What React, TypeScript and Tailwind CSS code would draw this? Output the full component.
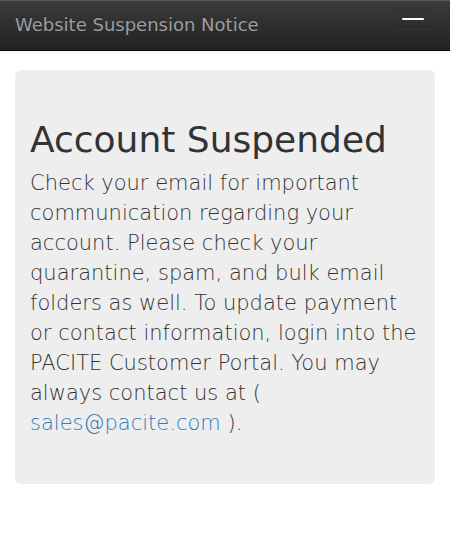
const App = () => {
  return (
    <div className="min-h-[544px] bg-white text-[#333] text-[14px] leading-[1.42857]" style={{ fontFamily: '"DejaVu Sans", sans-serif' }}>
      <nav className="h-[51px] flex items-start justify-between border-b border-[#080808] bg-gradient-to-b from-[#3c3c3c] to-[#222] shadow-[inset_0_1px_0_rgba(255,255,255,0.15),0_1px_5px_rgba(0,0,0,0.075)]">
        <a href="#" className="block h-[50px] px-[15px] py-[15px] text-[18px] leading-[20px] text-[#9d9d9d] [text-shadow:0_-1px_0_rgba(0,0,0,0.25)]">
          Website Suspension Notice
        </a>
        <button
          type="button"
          aria-label="Toggle navigation"
          className="mr-[15px] mt-[8px] flex h-[22px] w-[44px] items-center justify-center rounded-[4px] border border-[#333] px-[10px]"
        >
          <span className="block h-[2px] w-[22px] rounded-[1px] bg-white" />
        </button>
      </nav>
      <div className="px-[15px] pt-[19px]">
        <div className="rounded-[6px] bg-[#eee] px-[15px] pt-[30px] pb-[30px]">
          <h1 className="mt-[20px] mb-[8px] text-[36px] leading-[1.1] font-medium text-[#333]">
            Account Suspended
          </h1>
          <p className="mb-[16px] text-[21px] leading-[30px] font-extralight">
            Check your email for important communication regarding your account. Please check your quarantine, spam, and bulk email folders as well. To update payment or contact information, login into the PACITE Customer Portal. You may always contact us at ({" "}
            <a href="#" className="text-[#337ab7]">sales@pacite.com</a> ).
          </p>
        </div>
      </div>
    </div>
  );
};

export default App;
